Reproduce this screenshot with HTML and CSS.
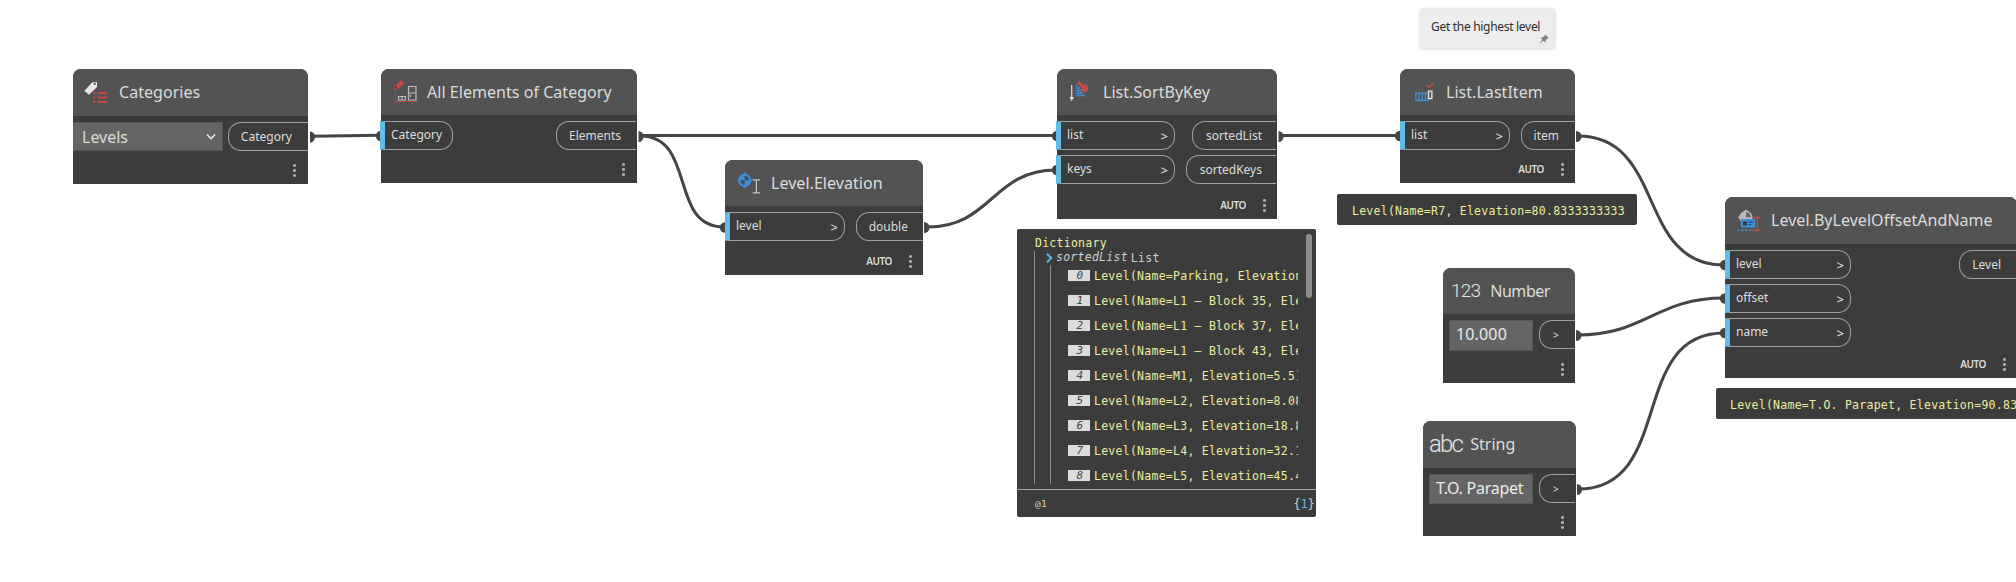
FILE: index.html
```html
<!DOCTYPE html>
<html lang="en">
<head>
<meta charset="utf-8">
<title>Level graph</title>
<link rel="stylesheet" href="styles.css">
</head>
<body>
<main class="canvas">
  <svg class="wires" width="2016" height="582" viewBox="0 0 2016 582">
    <g class="wire">
      <path d="M312 136.3L380 135.2"/>
      <path d="M640 135.500H1056"/>
      <path d="M640 136C697 136 668 227 724 227"/>
      <path d="M928 227C991 227 993 170 1056 170"/>
      <path d="M1281 135.500H1400"/>
      <path d="M1578 136C1666 136 1636 265 1724 265"/>
      <path d="M1578 335C1645 335 1656 298 1724 298"/>
      <path d="M1578 489C1675 489 1628 333 1724 333"/>
    </g>
    <g class="plug">
      <circle cx="381" cy="136" r="5.2"/>
      <circle cx="725" cy="227.500" r="5.200"/>
      <circle cx="1057" cy="136" r="5.2"/>
      <circle cx="1057" cy="170" r="5.2"/>
      <circle cx="1400" cy="136" r="5.2"/>
      <circle cx="1725" cy="265" r="5.2"/>
      <circle cx="1725" cy="298.500" r="5.200"/>
      <circle cx="1725" cy="333" r="5.2"/>
      <path d="M310 131.500a5 5.500 0 0 1 0 11z"/>
      <path d="M638.500 131a5 5.500 0 0 1 0 11z"/>
      <path d="M924 222a5.500 5.500 0 0 1 0 11z"/>
      <path d="M1278.500 131a5 5.500 0 0 1 0 11z"/>
      <path d="M1576 131a5.500 5.500 0 0 1 0 11z"/>
      <path d="M1576 330a5.500 5.500 0 0 1 0 11z"/>
      <path d="M1577 484a5 5.500 0 0 1 0 11z"/>
    </g>
  </svg>

  <section class="node n-categories">
    <header class="head">
      <svg class="icon" viewBox="0 0 26 26"><path d="M1.300 12L9 3.600L14 3V8L6 15.800z" fill="#e6e6e6"/><circle cx="11.800" cy="5" r="1.100" fill="#444"/><path d="M10.200 14h2.300M14.500 14H24M10.200 18.500h2.300M14.500 18.500H24M10.200 23h2.300M14.500 23H24" stroke="#c44a48" stroke-width="2.200"/></svg>
      <h2>Categories</h2>
    </header>
    <div class="body">
      <div class="select"><span>Levels</span><svg width="10" height="8" viewBox="0 0 10 8"><path d="M1 1.500L5 5.700L9 1.500" fill="none" stroke="#eee" stroke-width="1.600"/></svg></div>
      <div class="col right"><div class="port out">Category</div></div>
    </div>
    <footer class="foot"><i class="dots"></i></footer>
  </section>

  <section class="node n-elements">
    <header class="head">
      <svg class="icon" viewBox="0 0 26 26"><path d="M3 8L10 1L13.700 4.200L7 9.700L3 11z" fill="#c44a48"/><circle cx="5" cy="8.500" r="1" fill="#552a2a"/><path d="M4.500 11V22" stroke="#c44a48" stroke-dasharray="1.300 1" fill="none"/><path d="M4 22.500H26" stroke="#c44a48"/><path d="M17.500 7.500h7.500V21h-7.500zM17.500 14H25M7.500 17.500h7V21h-7zM11 17.500v3.500" fill="none" stroke="#bbb" stroke-width="1.200"/><path d="M19.500 16v2" stroke="#ddd"/></svg>
      <h2>All Elements of Category</h2>
    </header>
    <div class="body">
      <div class="col"><div class="port in"><span>Category</span></div></div>
      <div class="col right"><div class="port out">Elements</div></div>
    </div>
    <footer class="foot"><i class="dots"></i></footer>
  </section>

  <section class="node n-elevation">
    <header class="head">
      <svg class="icon" viewBox="0 0 26 26"><path d="M9.700 2.300L17.500 10.300L9.700 18.300L2 10.300z" fill="#3f8fdb"/><circle cx="9.700" cy="10.300" r="6.500" fill="#3f8fdb"/><path d="M9.700 10.300V5.800A4.500 4.500 0 0 1 14.200 10.300zM9.700 10.300V14.800A4.500 4.500 0 0 1 5.200 10.300z" fill="#444c55"/><path d="M17.700 9.800H25M17.700 22.800H25M21.400 9.800V22.800" stroke="#c4c4c4" stroke-width="1.200"/></svg>
      <h2>Level.Elevation</h2>
    </header>
    <div class="body">
      <div class="col"><div class="port in"><span>level</span><b>&gt;</b></div></div>
      <div class="col right"><div class="port out">double</div></div>
    </div>
    <footer class="foot"><em>AUTO</em><i class="dots"></i></footer>
  </section>

  <section class="node n-sort">
    <header class="head">
      <svg class="icon" viewBox="0 0 26 26"><path d="M4.700 6V19" stroke="#ddd" stroke-width="1.200"/><path d="M2.500 18H7L4.700 22.300z" fill="#ddd"/><path d="M9 6.500h2M9 9h4M9 11.500h5.500M9 14h7M9 16.500h9" stroke="#3f8fdb" stroke-width="1.500"/><path d="M9 6V17" stroke="#326ca6"/><path d="M11.200 3.200L16 8" stroke="#c44a48" stroke-width="3.300"/><path d="M14 8.500L18.500 5L21.300 7.500V11L18 13.500L14.500 12z" fill="#c44a48"/></svg>
      <h2>List.SortByKey</h2>
    </header>
    <div class="body">
      <div class="col"><div class="port in"><span>list</span><b>&gt;</b></div><div class="port in"><span>keys</span><b>&gt;</b></div></div>
      <div class="col right"><div class="port out">sortedList</div><div class="port out">sortedKeys</div></div>
    </div>
    <footer class="foot"><em>AUTO</em><i class="dots"></i></footer>
  </section>

  <section class="panel">
    <div class="root">Dictionary</div>
    <div class="tree">
      <div class="key"><svg width="7" height="10" viewBox="0 0 7 10"><path d="M1 .8L5.300 5L1 9.200" fill="none" stroke="#5bb8e8" stroke-width="2"/></svg><i>sortedList</i><span>List</span></div>
      <ol class="rows">
        <li><i>0</i><span>Level(Name=Parking, Elevation</span></li>
        <li><i>1</i><span>Level(Name=L1 – Block 35, Ele</span></li>
        <li><i>2</i><span>Level(Name=L1 – Block 37, Ele</span></li>
        <li><i>3</i><span>Level(Name=L1 – Block 43, Ele</span></li>
        <li><i>4</i><span>Level(Name=M1, Elevation=5.5)</span></li>
        <li><i>5</i><span>Level(Name=L2, Elevation=8.08</span></li>
        <li><i>6</i><span>Level(Name=L3, Elevation=18.8</span></li>
        <li><i>7</i><span>Level(Name=L4, Elevation=32.1</span></li>
        <li><i>8</i><span>Level(Name=L5, Elevation=45.4</span></li>
      </ol>
    </div>
    <div class="status"><small>@1</small><span>{<b>1</b>}</span></div>
    <div class="scroll"></div>
  </section>

  <aside class="note">Get the highest level<svg class="pin" width="10" height="10" viewBox="0 0 10 10"><path d="M6 .2L9.800 4L8.500 4.500L6.700 6.200L6.500 8.800L4.300 6.700L.4 9.800L3.200 5.600L1.300 3.500L4 3.300L5.800 1.500z" fill="#858585"/></svg></aside>

  <section class="node n-last">
    <header class="head">
      <svg class="icon" viewBox="0 0 26 26"><path d="M5.800 14.200H18.500V21.500H5.800zM9 14V22M12.200 14V22M15.400 14V22" fill="none" stroke="#3f8fdb" stroke-width="1.300"/><path d="M18.500 12.200h3.400v7.300h-3.400z" fill="#555" stroke="#e8e8e8" stroke-width="1.300"/><path d="M17 6.300L19.300 8.300L24 4" fill="none" stroke="#c44a48" stroke-width="1.600"/></svg>
      <h2>List.LastItem</h2>
    </header>
    <div class="body">
      <div class="col"><div class="port in"><span>list</span><b>&gt;</b></div></div>
      <div class="col right"><div class="port out">item</div></div>
    </div>
    <footer class="foot"><em>AUTO</em><i class="dots"></i></footer>
  </section>
  <div class="output o-last">Level(Name=R7, Elevation=80.8333333333</div>

  <section class="node n-number">
    <header class="head"><span class="glyph">123</span><h2>Number</h2></header>
    <div class="body">
      <div class="field">10.000</div>
      <div class="col right"><div class="port out bare">&gt;</div></div>
    </div>
    <footer class="foot"><i class="dots"></i></footer>
  </section>

  <section class="node n-string">
    <header class="head"><span class="glyph abc">abc</span><h2>String</h2></header>
    <div class="body">
      <div class="field">T.O. Parapet</div>
      <div class="col right"><div class="port out bare">&gt;</div></div>
    </div>
    <footer class="foot"><i class="dots"></i></footer>
  </section>

  <section class="node n-offset">
    <header class="head">
      <svg class="icon" viewBox="0 0 26 26"><circle cx="11" cy="10.300" r="6.500" fill="#b9b9b9"/><path d="M11 2.500L14 5H8zM3 10.300L5.500 7.500V13z" fill="#b9b9b9"/><path d="M11 10.300V5.300A5 5 0 0 1 16 10.300z" fill="#666"/><path d="M6 12H20V20.500H6z" fill="#3f8fdb"/><path d="M8 14.500h4v4H8z" fill="#2d3b4a"/><path d="M13.500 15.200h5M13.500 17.500h3" stroke="#24476b" stroke-width="1.200"/><path d="M2 23.300H19" stroke="#3f8fdb" stroke-width="1.200" stroke-dasharray="2.500 1.500"/><path d="M19 10.500H25.500M19 23.300H26M22.400 10.500V23.300" stroke="#c44a48" stroke-width="1.300"/></svg>
      <h2>Level.ByLevelOffsetAndName</h2>
    </header>
    <div class="body">
      <div class="col"><div class="port in"><span>level</span><b>&gt;</b></div><div class="port in"><span>offset</span><b>&gt;</b></div><div class="port in"><span>name</span><b>&gt;</b></div></div>
      <div class="col right"><div class="port out">Level</div></div>
    </div>
    <footer class="foot"><em>AUTO</em><i class="dots"></i></footer>
  </section>
  <div class="output o-offset">Level(Name=T.O. Parapet, Elevation=90.83</div>
</main>
</body>
</html>
```
FILE: styles.css
```css
* { box-sizing: border-box; }
body { margin: 0; background: #fff; }

.canvas {
  position: relative;
  width: 2016px;
  height: 582px;
  overflow: hidden;
  background: #fff;
  font-family: "Noto Sans", "Open Sans", sans-serif;
  color: #dcdcdc;
}
.wires { position: absolute; left: 0; top: 0; }
.wire { fill: none; stroke: #464444; stroke-width: 3; }
.plug { fill: #464444; }

/* Nodes */
.node {
  position: absolute;
  display: flex;
  flex-direction: column;
  background: #3c3c3c;
  border-radius: 8px 8px 0 0;
}
.n-categories { left: 73px; top: 69px; width: 235px; height: 115px; }
.n-elements { left: 381px; top: 69px; width: 256px; height: 114px; }
.n-elevation { left: 725px; top: 160px; width: 198px; height: 115px; }
.n-sort { left: 1057px; top: 69px; width: 220px; height: 150px; }
.n-last { left: 1400px; top: 69px; width: 175px; height: 114px; }
.n-number { left: 1443px; top: 268px; width: 132px; height: 115px; }
.n-string { left: 1423px; top: 421px; width: 153px; height: 115px; }
.n-offset { left: 1725px; top: 197px; width: 292px; height: 181px; }

.head {
  display: flex;
  align-items: center;
  gap: 10px;
  height: 46px;
  flex: none;
  padding-left: 10px;
  background: #535353;
  border-radius: 8px 8px 0 0;
}
.n-categories .head, .n-string .head, .n-offset .head { height: 47px; padding-bottom: 2px; }
.head h2 { margin: 0; font-size: 16px; font-weight: 400; line-height: 22px; letter-spacing: 0.04px; white-space: nowrap; }
.icon { width: 26px; height: 26px; flex: none; }
.glyph { font: 300 19px/22px Roboto, "Open Sans", sans-serif; letter-spacing: -0.8px; color: #e6e6e6; }
.glyph.abc { font-size: 24px; letter-spacing: -1.8px; }
.n-number .head { padding-left: 8px; }
.n-number h2 { letter-spacing: -0.45px; }
.n-string .head { padding-left: 6px; gap: 8px; }

.body { display: flex; justify-content: space-between; padding-top: 6px; flex: none; }
.col { display: flex; flex-direction: column; gap: 5px; }
.col.right { align-items: flex-end; }

.port {
  display: flex;
  align-items: center;
  height: 29px;
  border: 1px solid #a0a0a0;
  font-size: 12px;
  line-height: 16px;
  white-space: nowrap;
}
.in {
  justify-content: space-between;
  width: 120px;
  padding: 0 6px 2px;
  border-left: 5px solid #62bce8;
  border-radius: 0 13px 13px 0;
  background: #3c3c3c;
}
.in b { font-weight: 500; font-size: 13px; padding-top: 2px; }
.out { border-right: 0; border-radius: 13px 0 0 13px; padding: 0 16px 0 12px; }
.bare { width: 36px; padding-left: 13px; font-size: 10px; }
.n-elements .in { width: 73px; margin-left: -1px; }
.n-elements .out, .n-sort .out { margin-right: 1px; }
.n-elements .out { padding-right: 15px; }
.n-elevation .out { padding-right: 15px; }
.n-sort .in { width: 119px; margin-left: -1px; }
.n-sort .out { padding-right: 14px; padding-left: 13px; }
.n-last .in { width: 110px; }
.n-offset .in { width: 126px; }

.select {
  display: flex;
  align-items: center;
  justify-content: space-between;
  width: 150px;
  height: 29px;
  padding: 0 6px 0 9px;
  background: #656565;
  border: 1px solid #575757;
  border-left: 0;
  font-size: 16px;
}
.field {
  height: 31px;
  margin-left: 6px;
  padding: 0 0 2px 6px;
  width: 84px;
  background: #656565;
  border: 1px solid #575757;
  font-size: 16px;
  line-height: 27px;
  letter-spacing: 0.15px;
  color: #ebebeb;
  white-space: nowrap;
}
.n-string .field { width: 104px; height: 30px; letter-spacing: -0.25px; }
.n-string .out { margin-right: 1px; }

.foot {
  display: flex;
  flex: 1;
  align-items: flex-end;
  justify-content: flex-end;
  gap: 17px;
  padding: 0 11px 6px;
}
.n-categories .foot, .n-elements .foot, .n-string .foot { padding-right: 12px; }
.foot em { font-style: normal; font-weight: 600; font-size: 10px; line-height: 15px; letter-spacing: -0.45px; }
.dots {
  width: 3px;
  height: 15px;
  background: radial-gradient(circle, #a8a8a8 1.3px, transparent 1.7px) 0 0 / 3px 5px;
}

/* Values */
.panel, .output {
  font-family: "DejaVu Sans Mono", "Liberation Mono", monospace;
  font-size: 11.5px;
  letter-spacing: 0.26px;
  color: #eded9c;
  background: #3c3c3c;
  border-radius: 2px;
  white-space: nowrap;
}
.output { position: absolute; height: 31px; line-height: 34px; padding-left: 15px; width: 300px; overflow: hidden; }
.o-last { left: 1337px; top: 194px; }
.o-offset { left: 1716px; top: 388px; width: 302px; padding-left: 14px; }

.panel { position: absolute; left: 1017px; top: 229px; width: 299px; height: 288px; padding-top: 7px; }
.root { padding-left: 18px; line-height: 15px; }
.tree { margin-left: 17px; width: 264px; height: 233px; overflow: hidden; border-left: 1px solid #8c8c8c; }
.key { display: flex; align-items: center; height: 14px; padding-left: 11px; line-height: 15px; color: #d0d0d0; }
.key i { margin: -1px 3px 0 3px; }
.rows {
  list-style: none;
  margin: 0 0 0 15px;
  padding: 0 0 0 17px;
  border-left: 1px solid #8c8c8c;
  display: grid;
  grid-auto-rows: 21px;
  gap: 4px;
}
.rows li { display: flex; align-items: center; overflow: hidden; }
.rows i { width: 22px; height: 11px; flex: none; margin-right: 4px; padding-left: 2px; background: #dcdcdc; color: #444; font-size: 11px; line-height: 11px; text-align: center; }
.status { display: flex; align-items: center; justify-content: space-between; height: 28px; margin-top: 5px; padding: 0 1px 0 18px; border-top: 1px solid #a8a8a8; color: #d0d0d0; }
.status small { font-size: 9.5px; }
.status b { font-weight: 400; color: #5bb8e8; }
.scroll { position: absolute; right: 4px; top: 5px; width: 6px; height: 64px; border-radius: 3px; background: #8c8c8c; }

/* Comment */
.note {
  position: absolute;
  left: 1421px;
  top: 10px;
  width: 133px;
  height: 38px;
  padding-left: 10px;
  background: #ededed;
  box-shadow: 0 0 4px rgba(0, 0, 0, 0.25);
  color: #2d2d2d;
  font-size: 12px;
  line-height: 34px;
  letter-spacing: -0.3px;
  white-space: nowrap;
}
.pin { position: absolute; right: 5px; bottom: 4px; }
```
